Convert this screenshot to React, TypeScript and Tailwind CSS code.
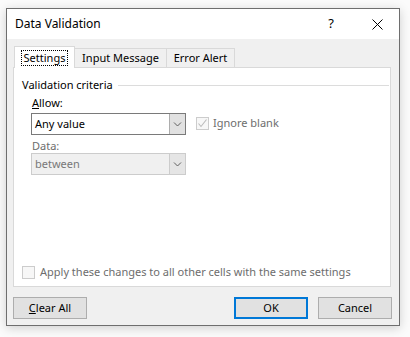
const font = { fontFamily: '"Segoe UI", "Noto Sans", "Open Sans", sans-serif' };

function Chevron() {
  return (
    <svg width="9" height="6" viewBox="0 0 9 6">
      <path d="M1 1.5 L4.5 5 L8 1.5" fill="none" stroke="#606060" strokeWidth="1" />
    </svg>
  );
}

function Combo({ value, disabled }: { value: string; disabled?: boolean }) {
  return (
    <div
      className={`flex h-[22px] w-[155px] border ${
        disabled ? "border-[#cccccc] bg-[#f0f0f0]" : "border-[#7a7a7a] bg-white"
      }`}
    >
      <div
        className={`flex flex-1 items-center pl-[3px] ${
          disabled ? "text-[#787878]" : "text-black"
        }`}
      >
        {value}
      </div>
      <div
        className={`flex w-[16px] items-center justify-center border-l ${
          disabled ? "border-[#cccccc] bg-[#e5e5e5]" : "border-[#adadad] bg-[#e1e1e1]"
        }`}
      >
        <Chevron />
      </div>
    </div>
  );
}

function CheckBox({ checked }: { checked?: boolean }) {
  return (
    <div className="flex h-[13px] w-[13px] shrink-0 items-center justify-center border border-[#cccccc] bg-[#f7f7f7]">
      {checked && (
        <svg width="11" height="11" viewBox="0 0 11 11">
          <path d="M1.5 5.5 L4 8.5 L9.5 1.5" fill="none" stroke="#bcbcbc" strokeWidth="1.1" />
        </svg>
      )}
    </div>
  );
}

function Tab({ label, width, active }: { label: string; width: string; active?: boolean }) {
  if (active) {
    return (
      <div className={`relative z-10 -mb-px -mr-px flex h-[22px] ${width} items-start justify-center border border-b-0 border-[#d9d9d9] bg-white pt-[3px]`}>
        <span className="border border-dotted border-black px-[2px] leading-[14px]">{label}</span>
      </div>
    );
  }
  return (
    <div className={`-mr-px flex h-[19px] ${width} items-center justify-center border border-b-0 border-[#d9d9d9] bg-[#f0f0f0] pt-[1px]`}>
      {label}
    </div>
  );
}

function Button({ children, primary }: { children: React.ReactNode; primary?: boolean }) {
  return (
    <div
      className={`flex h-[22px] w-[74px] items-center justify-center bg-[#e1e1e1] ${
        primary ? "border-2 border-[#0078d7]" : "border border-[#adadad]"
      }`}
    >
      {children}
    </div>
  );
}

export default function App() {
  return (
    <div className="h-[337px] w-[410px] bg-[#fbfbfb] pl-[6px] pt-[8px] text-[11px] text-black" style={font}>
      <div className="flex h-[318px] w-[394px] flex-col border border-[#6e6e6e] bg-[#f0f0f0] shadow-[0_2px_10px_rgba(0,0,0,0.18)]">
        <div className="flex h-[30px] items-center bg-white pl-[8px]">
          <span className="flex-1 text-[12px]">Data Validation</span>
          <span className="mr-[38px] text-[13px]">?</span>
          <svg width="11" height="11" viewBox="0 0 11 11" className="mr-[16px]">
            <path d="M0.5 0.5 L10.5 10.5 M10.5 0.5 L0.5 10.5" stroke="#000" strokeWidth="1" />
          </svg>
        </div>

        <div className="ml-[6px] mt-[7px] flex w-[378px] flex-col">
          <div className="ml-[1px] flex items-end">
            <Tab label="Settings" width="w-[61px]" active />
            <Tab label="Input Message" width="w-[93px]" />
            <Tab label="Error Alert" width="w-[69px]" />
          </div>
          <div className="flex h-[220px] flex-col border border-[#d9d9d9] bg-white pl-[8px]">
            <div className="mt-[9px] flex items-center">
              <span className="leading-[16px]">Validation criteria</span>
              <div className="ml-[5px] mr-px h-px flex-1 bg-[#dcdcdc]" />
            </div>
            <div className="ml-[10px] mt-[3px] leading-[14px]">
              <span className="underline">A</span>llow:
            </div>
            <div className="ml-[9px] mt-[3px] flex items-start">
              <Combo value="Any value" />
              <div className="ml-[10px] mt-[3px] flex items-center text-[#6d6d6d]">
                <CheckBox checked />
                <span className="ml-[4px] leading-[14px]">Ignore blank</span>
              </div>
            </div>
            <div className="ml-[10px] mt-[4px] leading-[14px] text-[#6d6d6d]">Data:</div>
            <div className="ml-[9px]">
              <Combo value="between" disabled />
            </div>
            <div className="mt-[90px] flex h-[14px] items-center text-[#6d6d6d]">
              <CheckBox />
              <span className="ml-[5px] leading-[14px]">Apply these changes to all other cells with the same settings</span>
            </div>
          </div>
        </div>

        <div className="ml-[6px] mt-[10px] flex w-[379px]">
          <Button>
            <span>
              <span className="underline">C</span>lear All
            </span>
          </Button>
          <div className="flex-1" />
          <Button primary>OK</Button>
          <div className="w-[10px]" />
          <Button>Cancel</Button>
        </div>
      </div>
    </div>
  );
}
